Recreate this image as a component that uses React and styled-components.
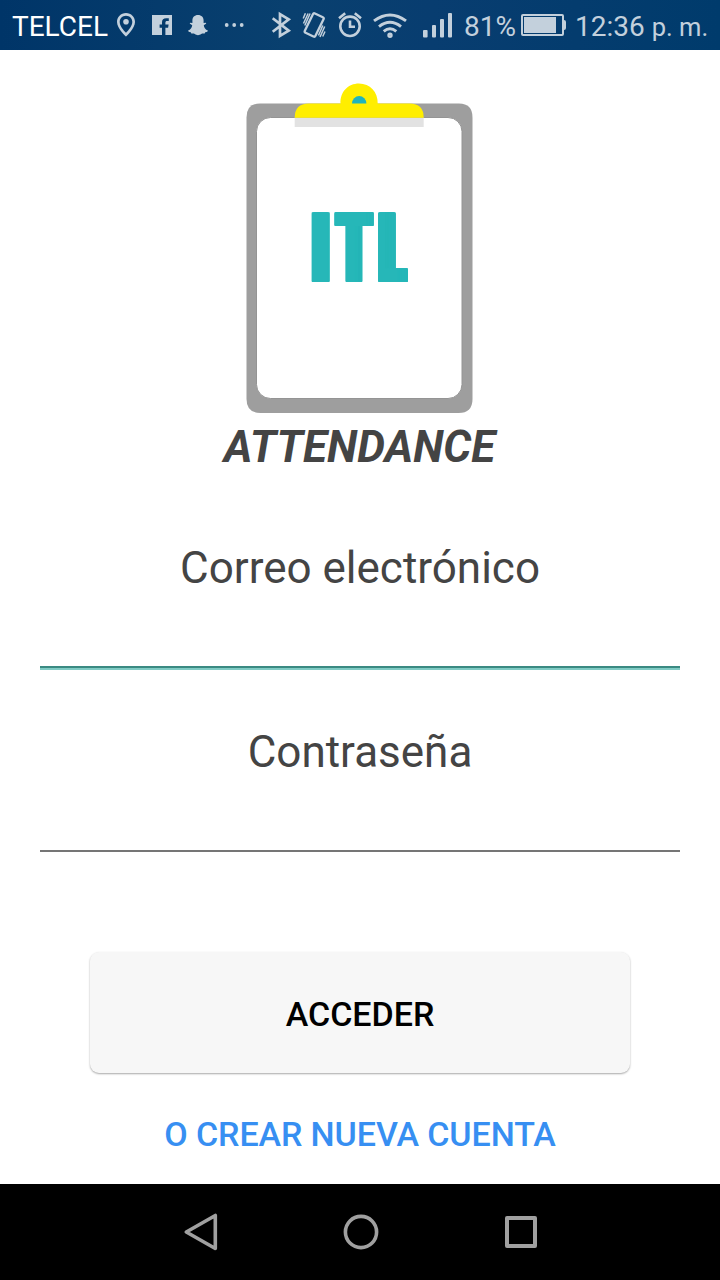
import React, { Component } from "react";
import styled, { createGlobalStyle } from "styled-components";

const GlobalStyle = createGlobalStyle`
  * { box-sizing: border-box; }
  body {
    margin: 0;
    background: #ffffff;
    font-family: Roboto, "Liberation Sans", sans-serif;
  }
`;

const Screen = styled.div`
  width: 720px;
  height: 1280px;
  display: flex;
  flex-direction: column;
  overflow: hidden;
  background: #ffffff;
`;

const StatusBar = styled.div`
  height: 50px;
  flex: none;
  display: flex;
  padding-left: 12px;
  background: linear-gradient(90deg, #003568 0%, #09406f 40%, #083d70 60%, #003b6c 100%);
  color: #c3d0dc;
  font-size: 28px;
  line-height: 54px;
  white-space: nowrap;
`;

const StatusText = styled.span`
  width: ${(props) => props.$w}px;
  flex: none;
  color: ${(props) => props.$color || "inherit"};
  small {
    margin-left: 7px;
    font-size: 25.5px;
  }
`;

const StatusIcon = styled.svg`
  width: ${(props) => props.$w}px;
  height: 50px;
  flex: none;
  display: block;
  fill: ${(props) => (props.$line ? "none" : "#c3d0dc")};
  stroke: ${(props) => (props.$line ? "#c3d0dc" : "none")};
`;

const Login = styled.main`
  flex: 1;
  display: flex;
  flex-direction: column;
  align-items: center;
  padding: 32px 40px 0;
`;

const Logo = styled.div`
  position: relative;
  width: 228px;
  height: 332px;
  svg {
    display: block;
  }
`;

const Initials = styled.div`
  position: absolute;
  left: 65px;
  top: 130.5px;
  display: flex;
  height: 70px;
  color: #26b7b8;
  font-size: 97.2px;
  font-weight: 900;
  line-height: 70px;
`;

// thickens the condensed letters: sideways by $grow, and one pixel down
const thicken = ({ $grow }) => {
  const shadows = ["0 1px 0"];
  for (let x = 1; x <= $grow; x++) {
    shadows.push(`${x}px 0 0`, `${x}px 1px 0`);
  }
  return shadows.join(", ");
};

const Letter = styled.span`
  display: block;
  width: ${(props) => props.$w}px;
  transform: translateX(${(props) => props.$x}px) scaleX(${(props) => props.$scale});
  transform-origin: left;
  text-shadow: ${thicken};
`;

const Title = styled.h1`
  margin: 7px 1px 0 0;
  height: 52px;
  line-height: 52px;
  color: #444444;
  font-size: 44px;
  font-weight: 700;
  font-style: italic;
`;

const Field = styled.label`
  width: 640px;
  display: flex;
  flex-direction: column;
  margin-top: ${(props) => props.$top}px;
  color: #444444;
  font-size: 44px;
  line-height: 52px;
  text-align: center;
`;

const Input = styled.input`
  height: 74px;
  width: 100%;
  padding: 0;
  border: 0;
  outline: 0;
  background: transparent;
  font-size: 36px;
  border-bottom: 2px solid ${(props) => (props.$active ? "#3b8a82" : "#757575")};
  box-shadow: ${(props) => (props.$active ? "0 2px 0 #80cbc4" : "none")};
`;

const LoginButton = styled.button`
  width: 540px;
  height: 121px;
  margin-top: 100px;
  padding: 3px 0 0;
  border: 0;
  border-radius: 9px;
  background: #f7f7f7;
  box-shadow: 0 1px 2px rgba(0, 0, 0, 0.34);
  color: #000000;
  font: 500 34px Roboto, sans-serif;
`;

const CreateLink = styled.a`
  margin-top: 41px;
  color: #378ff2;
  font-size: 34px;
  font-weight: 500;
  letter-spacing: -0.1px;
  line-height: 40px;
`;

const NavBar = styled.nav`
  height: 96px;
  flex: none;
  display: flex;
  align-items: center;
  justify-content: center;
  gap: 120px;
  padding-left: 2px;
  background: #000000;
  svg {
    fill: none;
    stroke: #a0a0a0;
    stroke-linejoin: round;
  }
`;

class App extends Component {
  renderStatus() {
    return (
      <StatusBar>
        <StatusText $w={100} $color="#ffffff">TELCEL</StatusText>
        {/* location */}
        <StatusIcon $w={36} viewBox="112 0 36 50">
          <path fillRule="evenodd" d="M126 13c-5.2 0-9 4-9 9 0 6.5 9 14.500 9 14.500s9-8 9-14.500c0-5-3.800-9-9-9zm0 2.700c3.700 0 6.300 2.800 6.300 6.300 0 3.800-3.900 8.400-6.300 10.800-2.400-2.400-6.300-7-6.300-10.800 0-3.500 2.600-6.300 6.300-6.300z" />
          <circle cx="126" cy="21.800" r="2.800" />
        </StatusIcon>
        {/* facebook */}
        <StatusIcon $w={36} viewBox="148 0 36 50">
          <path d="M152 15h20v20h-6.600v-7.300h2.700l.5-3.100h-3.200v-2c0-1 .5-1.600 1.700-1.600h1.700v-2.800h-2.600c-2.700 0-4.200 1.500-4.200 4.100v2.300h-2.400v3.100h2.400V35H152z" />
        </StatusIcon>
        {/* snapchat */}
        <StatusIcon $w={36} viewBox="184 0 36 50">
          <path d="M198 15c-3.500 0-5.600 2.300-5.600 5.500v2.600l-2-.4c-.8.200-.8 1 0 1.400l1.800 1.100c-.2 2.600-1.800 4.500-4 5.300-.4.800.5 1.300 2.600 1.700l.5 1.300c1.200.2 2.400-.2 3.500.5 1 .6 1.900 1.200 3.200 1.200s2.200-.6 3.200-1.200c1.100-.7 2.300-.3 3.500-.5l.5-1.300c2.100-.4 3-.9 2.600-1.700-2.200-.8-3.800-2.700-4-5.300l1.800-1.100c.8-.4.8-1.200 0-1.400l-2 .4v-2.600c0-3.200-2.100-5.500-5.600-5.500z" />
        </StatusIcon>
        <StatusIcon $w={48} viewBox="220 0 48 50">
          <circle cx="226.700" cy="25" r="1.900" />
          <circle cx="234.200" cy="25" r="1.900" />
          <circle cx="241.700" cy="25" r="1.900" />
        </StatusIcon>
        {/* bluetooth */}
        <StatusIcon $w={30} $line viewBox="268 0 30 50" strokeWidth="2.700">
          <path d="M272.700 18.300 288.700 30.700 280 35.900V14.100l8.700 5.200-16 12.400" />
        </StatusIcon>
        {/* vibrate */}
        <StatusIcon $w={36} $line viewBox="298 0 36 50" strokeWidth="2.300">
          <rect x="308.300" y="14.300" width="11.800" height="21.400" rx="1.500" transform="rotate(26 314.200 25)" />
          <path strokeWidth="1.500" d="M303.500 23.500l4.600-10M303.200 18.500l2.200-5.200M304.800 25.500l5.300-12M324.700 26.500l-4.700 10.500M322.800 25.500l-4.300 10M325 31.500l-2.300 5" />
        </StatusIcon>
        {/* alarm */}
        <StatusIcon $w={36} $line viewBox="334 0 36 50" strokeWidth="2.600">
          <circle cx="350" cy="26.300" r="9.700" />
          <path d="M350 20.500v6.200h5M339 18.200l6.200-5M361 18.200l-6.200-5" />
        </StatusIcon>
        {/* wifi */}
        <StatusIcon $w={46} $line viewBox="370 0 46 50" strokeWidth="3">
          <path d="M374 20.900q16-11.800 32 0M379 26.600q11-8.600 22 0M383.700 31.300q6.300-5 12.600 0" />
          <circle cx="390" cy="35.300" r="1.200" />
        </StatusIcon>
        {/* signal */}
        <StatusIcon $w={48} viewBox="416 0 48 50">
          <rect x="423" y="30" width="4.600" height="7.500" rx="1" />
          <rect x="432" y="25" width="4" height="12.500" rx="1" />
          <rect x="440" y="19" width="4" height="18.500" rx="1" />
          <rect x="448" y="13" width="4" height="24.500" rx="1" />
        </StatusIcon>
        <StatusText $w={54}>81%</StatusText>
        {/* battery */}
        <StatusIcon $w={57} viewBox="518 0 57 50">
          <path fillRule="evenodd" d="M523 14h39q2 0 2 2v4q2 0 2 2v6q0 2-2 2v4q0 2-2 2h-39q-2 0-2-2V16q0-2 2-2zm0 2v18h39V16z" />
          <path d="M524 17h32v16h-32z" />
        </StatusIcon>
        <StatusText $w={140}>12:36<small>p. m.</small></StatusText>
      </StatusBar>
    );
  }

  renderLogo() {
    return (
      <Logo>
        <svg width="228" height="332" viewBox="246 82 228 332">
          <path fill="#9e9e9e" d="M260 103.500h199q13.500 0 13.500 14v281.500q0 14-14 14H260.500q-14 0-14-14V117.500q0-14 13.500-14z" />
          <rect x="256.500" y="117.500" width="205.500" height="281" rx="14" fill="#ffffff" stroke="#949494" strokeWidth="1" />
          <path fill="#e2e2e2" d="M294.700 117.500h129v9.500h-129z" />
          <path fill="#ffee00" d="M294.700 117.800q0-14.300 14.300-14.300h31.500C340 92 348 83.500 359 83.500s19 8.500 18.700 20H409.500q14.200 0 14.200 14.300z" />
          <path fill="#1fb4bd" d="M352 103.500a7.200 7.600 0 0 1 14.400 0z" />
        </svg>
        <Initials>
          <Letter $w={23} $x={-5.2} $scale={0.95} $grow={2}>I</Letter>
          <Letter $w={44} $x={-0.6} $scale={0.55} $grow={14}>T</Letter>
          <Letter $w={30} $x={-2} $scale={0.42} $grow={25}>L</Letter>
        </Initials>
      </Logo>
    );
  }

  render() {
    return (
      <Screen>
        <GlobalStyle />
        {this.renderStatus()}
        <Login>
          {this.renderLogo()}
          <Title>ATTENDANCE</Title>
          <Field $top={69}>
            Correo electrónico
            <Input type="email" $active />
          </Field>
          <Field $top={58}>
            Contraseña
            <Input type="password" />
          </Field>
          <LoginButton>ACCEDER</LoginButton>
          <CreateLink>O CREAR NUEVA CUENTA</CreateLink>
        </Login>
        <NavBar>
          <svg width="40" height="48" viewBox="181 1208 40 48" strokeWidth="3.600">
            <path d="M215.300 1215.500v33L186.300 1232z" />
          </svg>
          <svg width="40" height="48" viewBox="341 1208 40 48" strokeWidth="3.600">
            <circle cx="361" cy="1232" r="15.600" />
          </svg>
          <svg width="40" height="48" viewBox="501 1208 40 48" strokeWidth="4">
            <rect x="507" y="1218" width="28" height="28" />
          </svg>
        </NavBar>
      </Screen>
    );
  }
}

export default App;
